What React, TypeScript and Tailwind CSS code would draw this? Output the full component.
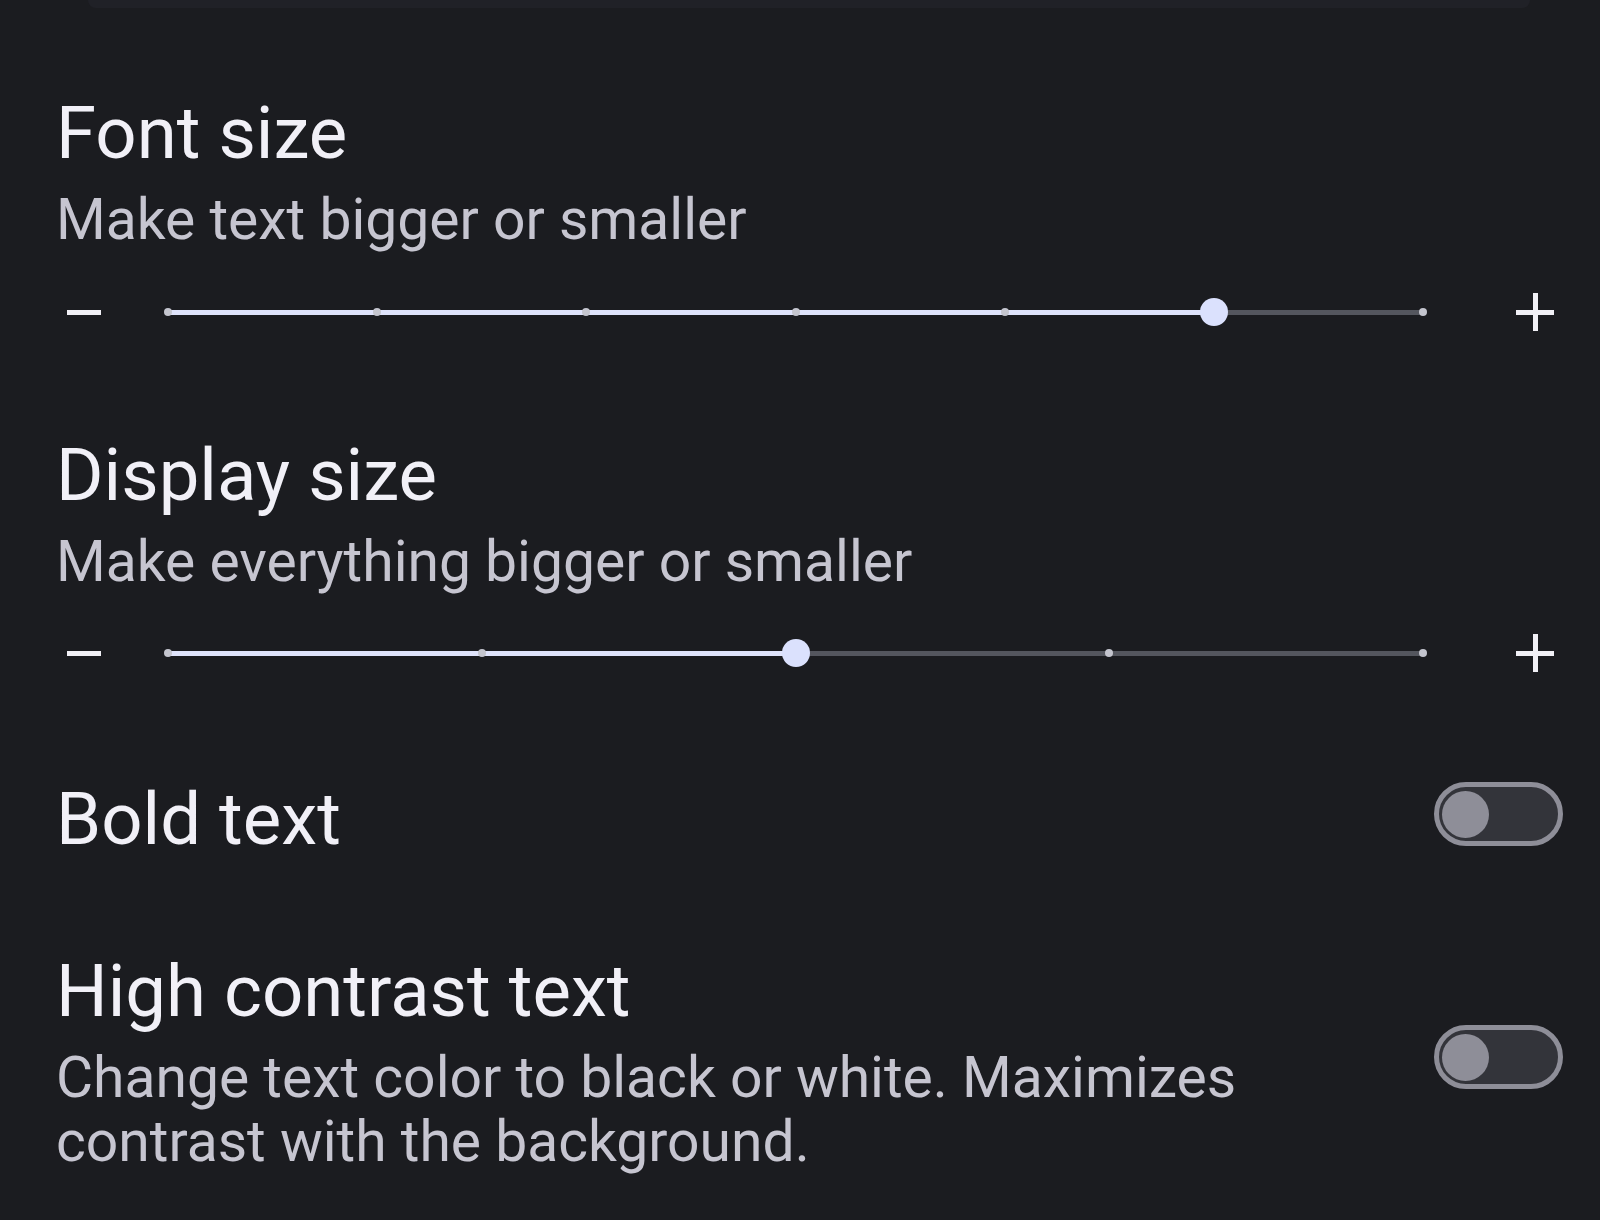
import React from 'react';

type SliderProps = {
  stops: number;
  value: number;
};

function StepSlider({ stops, value }: SliderProps) {
  const trackWidth = 1255;
  const step = trackWidth / (stops - 1);
  const thumbX = value * step;

  return (
    <div className="flex h-[40px] items-center">
      <div className="ml-[67px] h-[5px] w-[34px] bg-[#f1f0f6]" />
      <div className="relative ml-[63px] h-[28px] w-[1263px]">
        {/* inactive track */}
        <div className="absolute left-[4px] right-[4px] top-[11.5px] h-[5px] rounded-full bg-[#54565e]" />
        {/* active track */}
        <div
          className="absolute left-[4px] top-[11.5px] h-[5px] rounded-full bg-[#dfe3fb]"
          style={{ width: thumbX }}
        />
        {Array.from({ length: stops }).map((_, i) => (
          <div
            key={i}
            className="absolute top-[10px] h-[8px] w-[8px] rounded-full bg-[#c4c5ce]"
            style={{ left: i * step }}
          />
        ))}
        <div
          className="absolute top-0 h-[28px] w-[28px] rounded-full bg-[#dbe1fd]"
          style={{ left: thumbX + 4 - 14 }}
        />
      </div>
      <div className="relative ml-[89px] h-[38px] w-[38px]">
        <div className="absolute left-0 top-[16.5px] h-[5px] w-[38px] bg-[#f1f0f6]" />
        <div className="absolute left-[16.5px] top-0 h-[38px] w-[5px] bg-[#f1f0f6]" />
      </div>
    </div>
  );
}

function Toggle() {
  return (
    <div className="flex h-[64px] w-[129px] items-center rounded-full border-[5px] border-[#8e8e98] bg-[#33343a] pl-[3px]">
      <div className="h-[47px] w-[47px] rounded-full bg-[#8e8e98]" />
    </div>
  );
}

function Title({ children }: { children: React.ReactNode }) {
  return <div className="text-[72.5px] leading-[84px] text-[#f1f0f7]">{children}</div>;
}

function Summary({ children }: { children: React.ReactNode }) {
  return <div className="mt-3 text-[57px] leading-[64px] text-[#c6c5d0]">{children}</div>;
}

export default function App() {
  return (
    <div className="min-h-[1220px] w-full bg-[#1b1c20] font-['Roboto',sans-serif]">
      <div className="ml-[88px] h-[8px] w-[1442px] rounded-b-[28px] bg-[#202127]" />

      <div className="mt-[84px] pl-[56px]">
        <Title>Font size</Title>
        <Summary>Make text bigger or smaller</Summary>
      </div>
      <div className="mt-[40px]">
        <StepSlider stops={7} value={5} />
      </div>

      <div className="mt-[102px] pl-[56px]">
        <Title>Display size</Title>
        <Summary>Make everything bigger or smaller</Summary>
      </div>
      <div className="mt-[39px]">
        <StepSlider stops={5} value={2} />
      </div>

      <div className="mt-[105px] flex items-start pl-[56px]">
        <div className="flex-1">
          <Title>Bold text</Title>
        </div>
        <div className="ml-4 mr-[37px] mt-[4px]">
          <Toggle />
        </div>
      </div>

      <div className="mt-[88px] flex items-start pl-[56px]">
        <div className="w-[1300px]">
          <Title>High contrast text</Title>
          <Summary>Change text color to black or white. Maximizes contrast with the background.</Summary>
        </div>
        <div className="ml-auto mr-[37px] mt-[75px]">
          <Toggle />
        </div>
      </div>
    </div>
  );
}
